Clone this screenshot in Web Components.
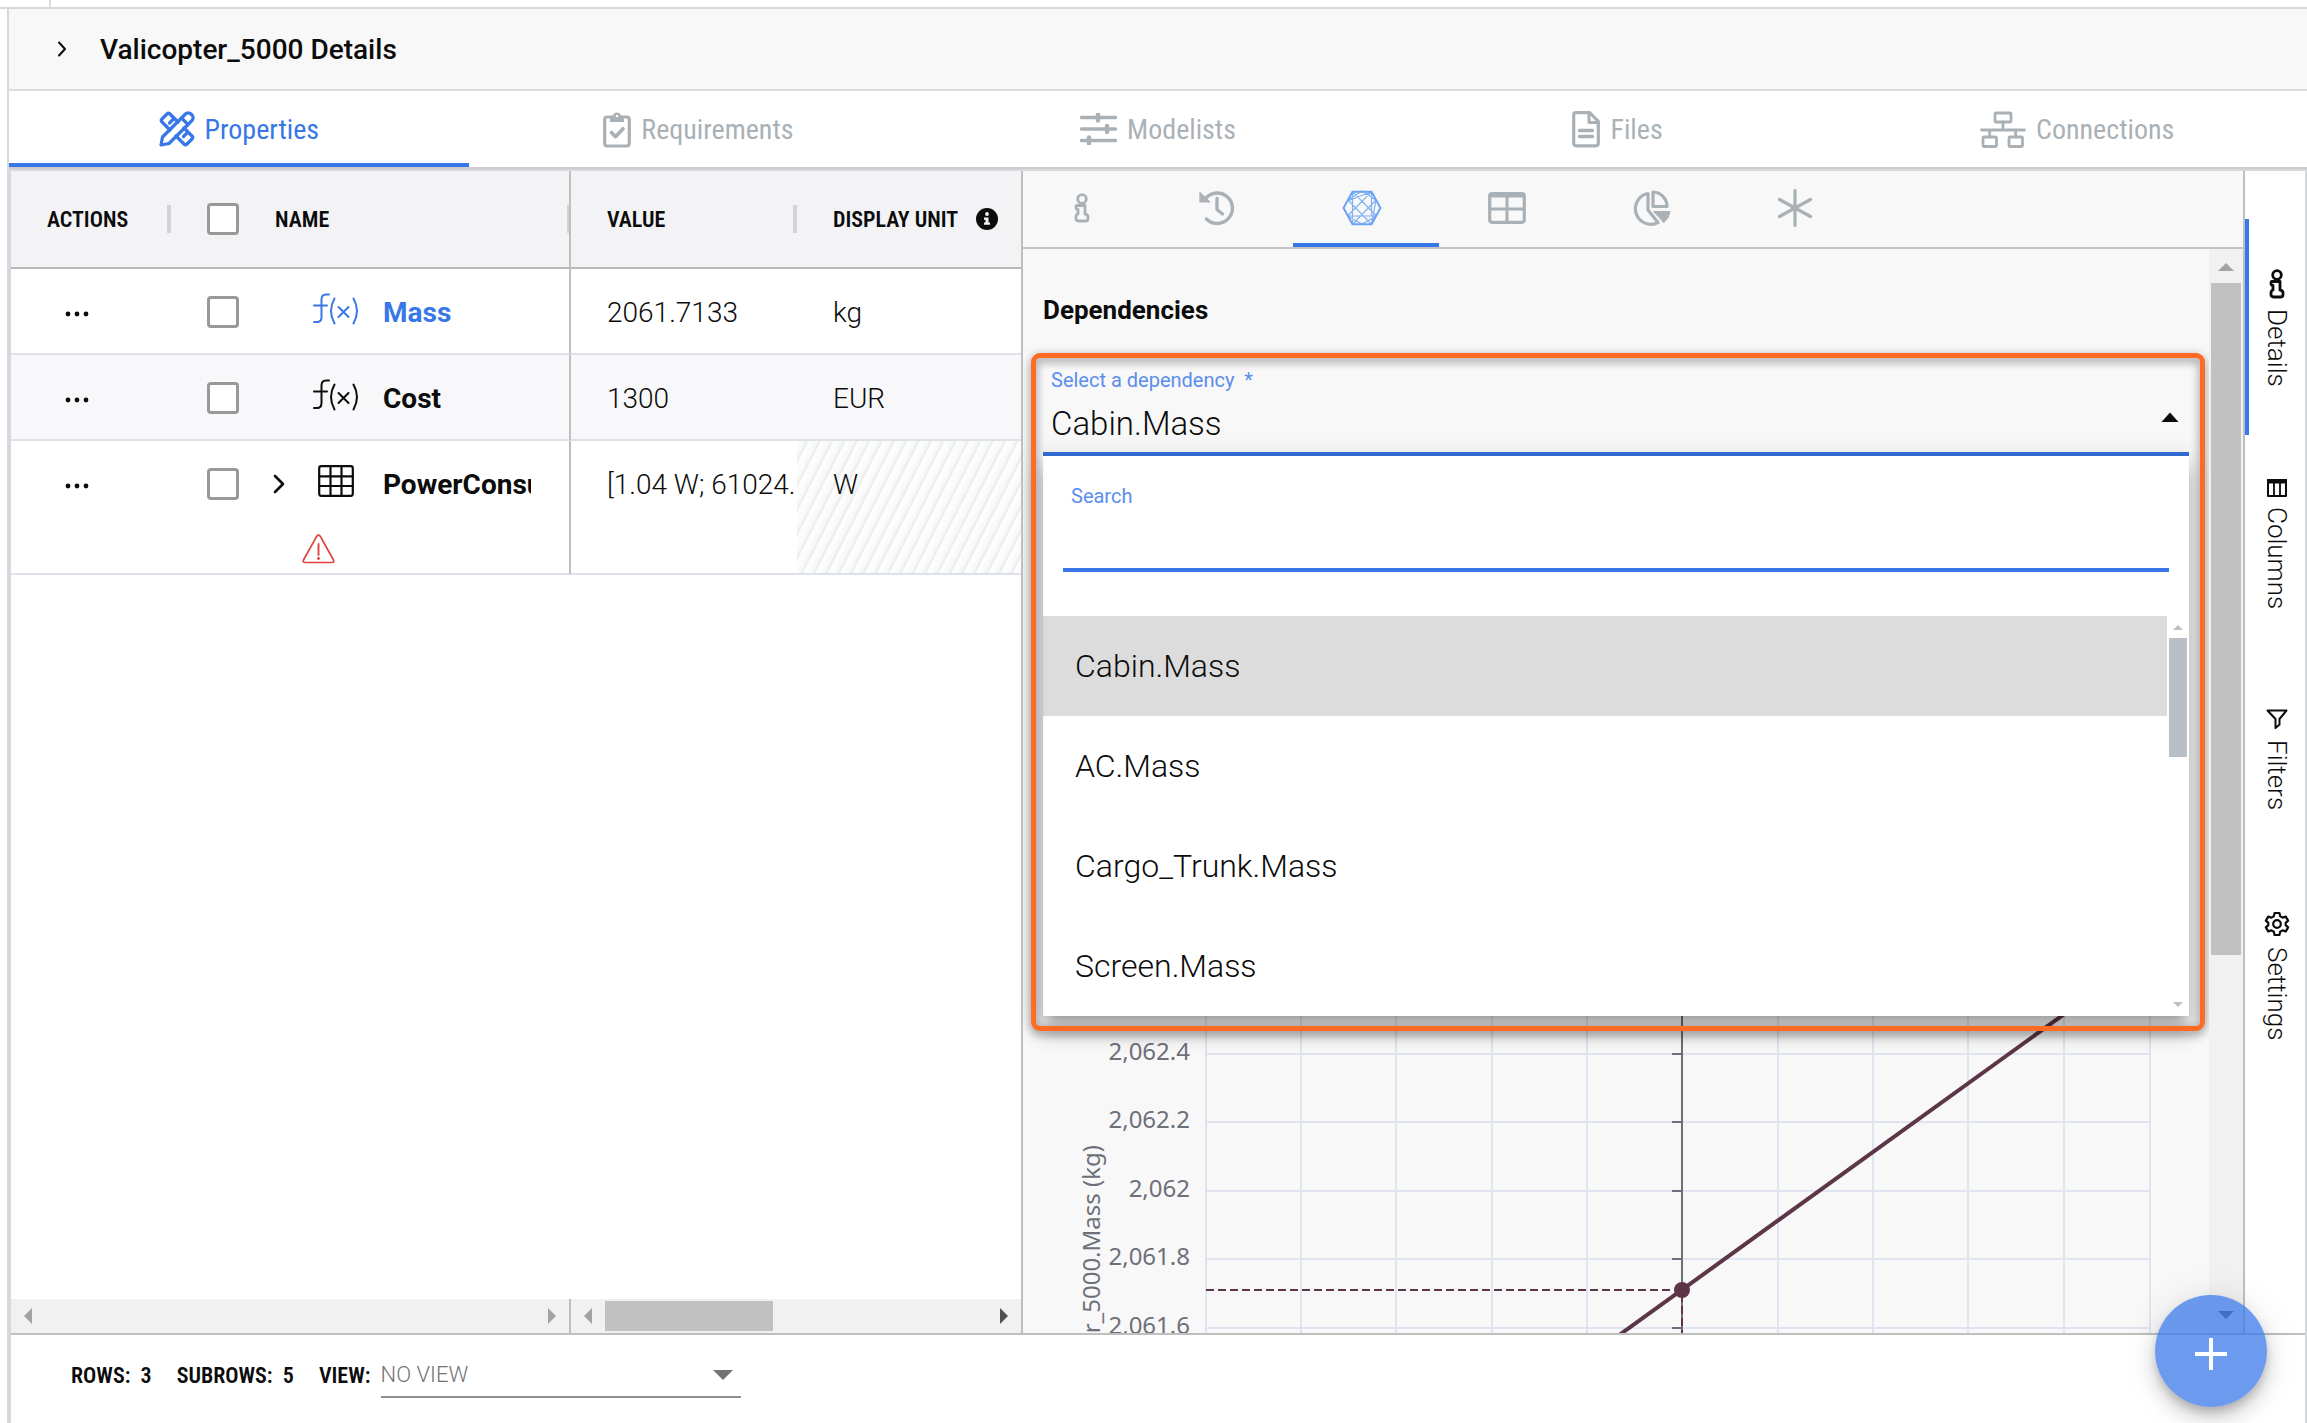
<!DOCTYPE html>
<html lang="en">
<head>
<meta charset="utf-8">
<title>Valicopter_5000 Details</title>
<style>
  html, body { margin: 0; height: 100%; }
  body {
    font-family: Roboto, "Liberation Sans", sans-serif;
    color: #0c0c0c; background: #fff; overflow: hidden;
    --blue: #3877e8; --muted: #a9b1b7; --frame: #d5d9dd; --line: #bfbfbf;
    --narrow: "Roboto Condensed", Roboto, sans-serif;
  }
</style>
</head>
<body>
<app-shell>
  <details-header slot="header">Valicopter_5000 Details</details-header>
  <nav-tabs slot="tabs">
    <nav-tab icon="tools" active>Properties</nav-tab>
    <nav-tab icon="clipboard">Requirements</nav-tab>
    <nav-tab icon="sliders">Modelists</nav-tab>
    <nav-tab icon="file">Files</nav-tab>
    <nav-tab icon="sitemap">Connections</nav-tab>
  </nav-tabs>
  <property-grid slot="grid"></property-grid>
  <details-panel slot="panel">
    <dependency-select></dependency-select>
    <dependency-chart></dependency-chart>
  </details-panel>
  <side-rail slot="rail">
    <side-tab icon="info" active>Details</side-tab>
    <side-tab icon="columns">Columns</side-tab>
    <side-tab icon="filter">Filters</side-tab>
    <side-tab icon="gear">Settings</side-tab>
  </side-rail>
  <grid-footer slot="footer"></grid-footer>
  <add-button slot="fab"></add-button>
</app-shell>

<script>
const ICONS = {
  chevron: [10, 16, '<path d="M2 1.500l6 6.500-6 6.500" stroke-width="2"/>'],
  chevronBold: [13, 20, '<path d="M2 2l8 8-8 8" stroke-width="2.600"/>'],
  tools: [36, 36, '<g stroke-width="3.200"><path d="M2 34l1.500-8L26.500 3a4 4 0 0 1 5.500 0l1 1a4 4 0 0 1 0 5.500L10 32.500z"/><path d="M22.500 7l6.500 6.500"/><path d="M11 19L3 11Q1.500 9.500 3 8l5-5q1.500-1.500 3 0l8 8"/><path d="M25 17l8 8q1.500 1.500 0 3l-5 5q-1.500 1.500-3 0l-8-8"/><path d="M14 8.500l-3.500 3.500M28 22l-3.500 3.500"/></g>'],
  clipboard: [28, 37, '<rect x="1.700" y="6" width="24.600" height="29" rx="2.500" stroke-width="3.200"/><path d="M7 11V6.500q0-2 2-2h1a4.200 4.200 0 0 1 8 0h1q2 0 2 2V11z" fill="currentColor" stroke="none"/><circle cx="14" cy="5" r="1.300" fill="#fff" stroke="none"/><path d="M8.500 21.500l4 4.200 7.500-8" stroke-width="3.600"/>'],
  sliders: [37, 32, '<path d="M1.500 4.500h34M1.500 16h34M1.500 27.500h34" stroke-width="3.400"/><path d="M18 1.500v6M27 13v6M9 24.500v6" stroke-width="4.400"/>'],
  file: [28, 37, '<path d="M1.700 4.200q0-2.500 2.500-2.500h13.500l8.600 8.600v22q0 2.500-2.500 2.500H4.200q-2.500 0-2.500-2.500z" stroke-width="3.200"/><path d="M17 2v9.500h9" stroke-width="3"/><path d="M7.500 19.500h13M7.500 25.500h13" stroke-width="3.400"/>'],
  sitemap: [46, 37, '<g stroke-width="2.800"><rect x="15" y="2" width="16" height="9" rx="1"/><rect x="3" y="26" width="13.500" height="9.500" rx="1"/><rect x="29" y="26" width="13.500" height="9.500" rx="1"/><path d="M23 11v8M1.500 19h43M9.700 19v7M35.700 19v7"/></g>'],
  info: [16, 30, '<circle cx="8" cy="6" r="4.300" stroke-width="2.800"/><path d="M3 12.500h8v8.500q3 .5 3 3v1.500q0 2.500-2.500 2.500H4.500Q2 28 2 25.500V24q0-2.500 2-3v-4.500q-2 0-2-2t1-2z" stroke-width="2.800"/>'],
  history: [36, 36, '<path d="M5.500 10A15.200 15.200 0 1 1 7.500 29" stroke-width="3.400"/><path d="M1.200 2.500l9.800 9.500H1.200z" fill="currentColor" stroke-width="1"/><path d="M18 8.500V19.500l5.500 4.500" stroke-width="3.400"/>'],
  poly: [40, 36, '<path d="M1.500 18L10.500 1.700h19L38.500 18l-9 16.300h-19z" stroke-width="2"/><g stroke-width="1.200" opacity=".85"><path d="M10.500 1.700v32.600M29.500 1.700v24M5.500 11L29.500 1.700M6 10L20 1M10.500 1.700L34.500 26M29.500 1.700L5.500 26M6 10l23.500 24.300M34 10L10.500 34.300M5.500 26h29M34 10l-4.500 24.300M20 34L5.500 26M20 34l14.500-8M20 1l14 9"/></g>'],
  table: [38, 32, '<rect x="1.700" y="1.700" width="34.600" height="28.600" rx="2.500" stroke-width="3.200"/><path d="M2 4h34M19 3v27M2 17h34" stroke-width="3"/>'],
  pie: [40, 37, '<path d="M17 3.500A15.500 15.500 0 1 0 27 32.500L17 20z" stroke-width="3.200"/><path d="M22 2v14.500h14A14.500 14.500 0 0 0 22 2z" stroke-width="3.200"/><path d="M23 21.500h16q-.5 6-6 11z" fill="currentColor" stroke-width="1"/>'],
  asterisk: [34, 38, '<path d="M17 1.500v35M1.500 10.500l31 17M32.500 10.500l-31 17" stroke-width="3.200"/>'],
  columns: [20, 18, '<path d="M1 1h18v16H1z" stroke-width="2"/><path d="M0 0h20v4.500H0z" fill="currentColor" stroke="none"/><path d="M7 3v14M13 3v14" stroke-width="1.800"/>'],
  filter: [22, 21, '<path d="M1.500 1.500h19l-7 8.500v5.500L9.500 19V10z" stroke-width="2"/>'],
  gear: [26, 26, '<path d="M10.600 2h4.800l.8 3.300 2.300 1.300 3.300-1 2.300 4-2.400 2.300v2.200l2.400 2.300-2.300 4-3.300-1-2.300 1.300-.8 3.300h-4.800l-.8-3.300-2.300-1.300-3.300 1-2.300-4 2.400-2.300v-2.200L1.900 9.600l2.300-4 3.300 1 2.300-1.300z" stroke-width="2.200"/><circle cx="13" cy="13" r="3.800" stroke-width="2.200"/>'],
  dots: [24, 6, '<g fill="currentColor" stroke="none"><circle cx="3" cy="3" r="2.400"/><circle cx="12" cy="3" r="2.400"/><circle cx="21" cy="3" r="2.400"/></g>'],
  fx: [46, 32, '<g stroke-width="2"><path d="M16 1.500h-3q-4.500 0-4.500 5V24q0 5-4.500 5H1M1 12.500h13"/><path d="M21.500 5.500q-7 12.500 0 25M40.500 5.500q7 12.500 0 25"/><path d="M25.500 14l10 10M35.500 14l-10 10"/></g>'],
  grid: [36, 32, '<rect x="1.200" y="1.200" width="33.600" height="29.600" rx="2" stroke-width="2.200"/><path d="M12.500 1v30M23.500 1v30M1 11.300h34M1 21h34" stroke-width="2.200"/>'],
  warning: [33, 30, '<path d="M14.800 2.200q1.700-2.200 3.400 0L31.500 26q1 2.500-1.500 2.500H3Q.5 28.500 1.500 26z" stroke-width="1.700"/><path d="M16.500 10v11" stroke-width="1.900"/><circle cx="16.500" cy="24.500" r="1.400" fill="currentColor" stroke="none"/>'],
  infoDot: [22, 22, '<circle cx="11" cy="11" r="11" fill="currentColor" stroke="none"/><g fill="#f3f3f6" stroke="none"><circle cx="11" cy="6" r="1.900"/><path d="M8 9.500h4.500v5H14v2.200H8v-2.200h1.500v-2.800H8z"/></g>'],
  plus: [32, 32, '<path d="M16 0v32M0 16h32" stroke-width="4" stroke-linecap="butt"/>'],
  up: [16, 8, '<path d="M0 8L8 0l8 8z" fill="currentColor" stroke="none"/>'],
  down: [16, 8, '<path d="M0 0h16L8 8z" fill="currentColor" stroke="none"/>'],
  left: [8, 16, '<path d="M8 0v16L0 8z" fill="currentColor" stroke="none"/>'],
  right: [8, 16, '<path d="M0 0v16l8-8z" fill="currentColor" stroke="none"/>'],
  smallUp: [10, 5, '<path d="M0 5l5-5 5 5z" fill="currentColor" stroke="none"/>'],
  smallDown: [10, 5, '<path d="M0 0h10L5 5z" fill="currentColor" stroke="none"/>'],
  caretUp: [18, 10, '<path d="M.5 10L9 .5 17.500 10z" fill="currentColor" stroke="none"/>'],
  caretDown: [20, 10, '<path d="M0 0h20L10 10z" fill="currentColor" stroke="none"/>']
};

function define(name, html, setup) {
  const template = document.createElement('template');
  template.innerHTML = '<style>*{box-sizing:border-box}:host{display:block;box-sizing:border-box}button,select,input{font:inherit;color:inherit;background:none;border:0;padding:0;margin:0;border-radius:0}</style>' + html;
  customElements.define(name, class extends HTMLElement {
    connectedCallback() {
      if (this.shadowRoot) return;
      this.attachShadow({ mode: 'open' }).append(template.content.cloneNode(true));
      if (setup) setup(this, this.shadowRoot);
    }
  });
}

define('ui-icon', `<style>:host{display:block;flex:none}svg{display:block;fill:none;stroke:currentColor;stroke-linejoin:round;stroke-linecap:round}</style>`, (el, root) => {
  const [w, h, body] = ICONS[el.getAttribute('name')];
  const box = document.createElement('div');
  box.innerHTML = `<svg width="${w}" height="${h}" viewBox="0 0 ${w} ${h}" aria-hidden="true">${body}</svg>`;
  root.append(box.firstChild);
});

define('app-shell', `<style>
  :host{display:flex;flex-direction:column;height:100vh;position:relative}
  .strip{flex:none;height:9px;padding-left:49px;border-bottom:2px solid var(--frame)}
  .strip i{display:block;width:2px;height:7px;background:#ddd}
  .page{flex:1;min-height:0;display:flex;flex-direction:column;margin-left:7px;border-left:2px solid var(--frame)}
  .body{flex:1;min-height:0;display:flex;flex-direction:column;border:2px solid var(--frame);border-bottom:0}
  .row{flex:1;min-height:0;display:flex}
  </style>
  <div class="strip"><i></i></div>
  <div class="page">
    <slot name="header"></slot><slot name="tabs"></slot>
    <div class="body">
      <div class="row"><slot name="grid"></slot><slot name="panel"></slot><slot name="rail"></slot></div>
      <slot name="footer"></slot>
    </div>
  </div>
  <slot name="fab"></slot>`);

define('details-header', `<style>
  :host{flex:none;display:flex;align-items:center;gap:33px;height:82px;padding-left:48px;background:#f8f8f8;border-bottom:2px solid #dcdcdc}
  h1{margin:0;padding-top:2px;font-size:28px;line-height:32px;font-weight:500}
  button{display:block}
  </style><button aria-label="Expand"><ui-icon name="chevron"></ui-icon></button><h1><slot></slot></h1>`);

define('nav-tabs', `<style>:host{flex:none;display:flex;height:78px;border-bottom:2px solid #ccc}</style><slot></slot>`);

define('nav-tab', `<style>
  :host{flex:1 1 0;color:var(--muted)}
  :host([active]){color:var(--blue)}
  button{width:100%;height:76px;padding-top:4px;border-bottom:4px solid transparent;display:flex;align-items:center;justify-content:center;gap:10px;font:400 28px/32px var(--narrow)}
  span{padding-top:2px}
  :host([active]) button{border-color:var(--blue)}
  </style><button role="tab"><span><slot></slot></span></button>`, (el, root) => {
  const icon = document.createElement('ui-icon');
  icon.setAttribute('name', el.getAttribute('icon'));
  root.querySelector('button').prepend(icon);
});

define('scroll-bar', `<style>
  :host{display:flex;align-items:center;justify-content:space-between;height:34px;padding:0 13px;background:#f1f1f1;color:#a3a3a3}
  .thumb{flex:none;width:168px;height:30px;background:#c1c1c1;margin-left:13px;margin-right:auto}
  :host(:not([thumb])) .thumb{display:none}
  :host([thumb]) .end{color:#505050}
  </style><ui-icon name="left"></ui-icon><div class="thumb"></div><ui-icon class="end" name="right"></ui-icon>`);

define('property-grid', `<style>
  :host{flex:none;display:flex;flex-direction:column;width:1012px;border-right:2px solid var(--line);background:#fff}
  table{width:1010px;table-layout:fixed;border-collapse:separate;border-spacing:0;font-size:28px;line-height:32px;font-weight:300}
  th,td{padding:0;text-align:left;vertical-align:top;overflow:hidden}
  th{height:98px;background:#f3f3f6;border-bottom:2px solid #b9b9b9;font:600 22px/26px var(--narrow)}
  .head{height:96px;display:flex;align-items:center}
  .head::after{content:"";width:4px;height:28px;background:#d3d3d6;margin-left:auto}
  .head.pick::after{width:2px}
  .head span,.cell span.t{padding-top:2px}
  th:last-child .head::after{display:none}
  td{border-bottom:2px solid #dde1ea}
  td:nth-child(2),th:nth-child(2){border-right:2px solid var(--line)}
  tr:nth-child(2) td{background:#f8f8fb}
  .cell{height:84px;padding-top:2px;display:flex;align-items:center;white-space:nowrap}
  .cell.act{padding:6px 0 0 54px}
  .head.act0{padding-left:36px}
  .pick{padding-left:36px}
  .v{padding-left:36px}
  input{appearance:none;flex:none;width:32px;height:32px;border:3px solid #999;border-radius:4px;background:#fff}
  .exp{width:12px;margin-left:34px;flex:none}
  .ico{width:46px;margin-left:28px;display:flex;justify-content:center;flex:none;padding-bottom:6px}
  .name{margin-left:24px;width:148px;overflow:hidden;font-weight:700}
  .mass{color:var(--blue)}
  .title{margin-left:36px}
  .warn{height:48px;padding:9px 0 0 131px;color:#e0413c}
  .hatch{background:repeating-linear-gradient(117deg,#fff 0,#f7f8f8 7px,#edefef 9px,#edefef 10px,#fff 11px)}
  .unit{gap:18px}
  .fill{flex:1}
  .bars{flex:none;display:flex}
  .bars scroll-bar:first-child{width:560px;border-right:2px solid var(--line)}
  .bars scroll-bar:last-child{flex:1}
  </style>
  <table>
    <colgroup><col style="width:160px"><col style="width:400px"><col style="width:226px"><col style="width:224px"></colgroup>
    <thead><tr>
      <th><div class="head act0"><span>ACTIONS</span></div></th>
      <th><div class="head pick"><input type="checkbox" aria-label="Select all rows"><span class="title">NAME</span></div></th>
      <th><div class="head v"><span>VALUE</span></div></th>
      <th><div class="head v unit"><span>DISPLAY UNIT</span><ui-icon name="infoDot"></ui-icon></div></th>
    </tr></thead>
    <tbody>
      <tr><td><div class="cell act"><button aria-label="Mass actions"><ui-icon name="dots"></ui-icon></button></div></td>
        <td><div class="cell pick mass"><input type="checkbox" aria-label="Select Mass"><span class="exp"></span><span class="ico"><ui-icon name="fx"></ui-icon></span><span class="name t">Mass</span></div></td>
        <td><div class="cell v"><span class="t">2061.7133</span></div></td><td><div class="cell v"><span class="t">kg</span></div></td></tr>
      <tr><td><div class="cell act"><button aria-label="Cost actions"><ui-icon name="dots"></ui-icon></button></div></td>
        <td><div class="cell pick"><input type="checkbox" aria-label="Select Cost"><span class="exp"></span><span class="ico"><ui-icon name="fx"></ui-icon></span><span class="name t">Cost</span></div></td>
        <td><div class="cell v"><span class="t">1300</span></div></td><td><div class="cell v"><span class="t">EUR</span></div></td></tr>
      <tr><td><div class="cell act"><button aria-label="Row actions"><ui-icon name="dots"></ui-icon></button></div></td>
        <td><div class="cell pick"><input type="checkbox" aria-label="Select row"><span class="exp"><ui-icon name="chevronBold"></ui-icon></span><span class="ico"><ui-icon name="grid"></ui-icon></span><span class="name t">PowerConsu</span></div>
          <div class="warn"><ui-icon name="warning"></ui-icon></div></td>
        <td><div class="cell v"><span class="t">[1.04 W; 61024.</span></div></td><td class="hatch"><div class="cell v"><span class="t">W</span></div></td></tr>
    </tbody>
  </table>
  <div class="fill"></div>
  <div class="bars"><scroll-bar></scroll-bar><scroll-bar thumb></scroll-bar></div>`);

define('details-panel', `<style>
  :host{flex:1;min-width:0;display:flex;flex-direction:column;background:#f8f8f8;border-right:2px solid var(--line)}
  .tools{flex:none;height:78px;display:flex;border-bottom:2px solid #c4c4c4;color:var(--muted)}
  .tools button{width:144px;height:76px;padding:2px 8px 0 0;border-bottom:4px solid transparent;display:flex;align-items:center;justify-content:center}
  .tools button:first-child{width:126px}
  .tools .on{width:146px;color:#6ba4f2;border-color:var(--blue)}
  .area{flex:1;min-height:0;display:flex}
  .content{flex:1;min-width:0;overflow:hidden;padding:45px 20px 0;display:flex;flex-direction:column}
  h2{margin:0;font-size:26px;line-height:32px;font-weight:700}
  .bar{flex:none;width:34px;background:#f1f1f1;display:flex;flex-direction:column;align-items:center;padding:14px 0;color:#a3a3a3}
  .bar i{width:30px;height:672px;margin-top:12px;background:#c1c1c1}
  .bar .end{margin-top:auto;color:#505050}
  </style>
  <div class="tools" role="tablist">
    <button aria-label="Info"><ui-icon name="info"></ui-icon></button>
    <button aria-label="History"><ui-icon name="history"></ui-icon></button>
    <button class="on" aria-label="Dependencies"><ui-icon name="poly"></ui-icon></button>
    <button aria-label="Table"><ui-icon name="table"></ui-icon></button>
    <button aria-label="Chart"><ui-icon name="pie"></ui-icon></button>
    <button aria-label="All"><ui-icon name="asterisk"></ui-icon></button>
  </div>
  <div class="area">
    <div class="content"><h2>Dependencies</h2><slot></slot></div>
    <div class="bar"><ui-icon name="up"></ui-icon><i></i><ui-icon class="end" name="down"></ui-icon></div>
  </div>`);

define('dependency-select', `<style>
  :host{position:relative;z-index:2;flex:none;height:130px;padding-top:42px}
  label{display:block;font-size:20px;line-height:24px;color:#5b8eec}
  .field label{padding-left:8px}
  .field{display:flex;flex-direction:column;height:88px;border-bottom:4px solid #3370dd}
  .box{display:flex;align-items:center;padding:0 10px 0 8px;height:40px;margin-top:12px}
  select{appearance:none;flex:1;font-size:33px;line-height:40px;font-weight:300;height:40px}
  .box ui-icon{margin-bottom:14px}
  .menu{position:absolute;top:100%;left:0;right:0;background:#fff;box-shadow:0 10px 10px -6px rgba(0,0,0,.2),0 16px 20px 2px rgba(0,0,0,.14),0 6px 28px 4px rgba(0,0,0,.12)}
  .search{padding:28px 20px 44px}
  .search label{padding-left:8px}
  .search input{display:block;width:100%;height:64px;padding:8px;font-size:28px;border-bottom:4px solid var(--blue);outline:0}
  .list{display:flex;height:400px}
  ul{flex:1;margin:0;padding:0;list-style:none}
  li{height:100px;line-height:100px;padding-left:32px;font-size:32px;font-weight:300}
  li[aria-selected]{background:#dcdcdc}
  .bar{width:22px;padding:9px 0;display:flex;flex-direction:column;align-items:center;color:#b8bfc6}
  .bar i{width:18px;height:119px;margin-top:8px;background:#b8bfc6}
  .bar .end{margin-top:auto}
  .ring{position:absolute;left:-12px;right:-16px;top:27px;height:678px;border:5px solid #ff6b24;border-radius:9px;filter:drop-shadow(0 3px 5px rgba(0,0,0,.5));pointer-events:none}
  </style>
  <div class="menu">
    <div class="search"><label for="q">Search</label><input id="q" type="text"></div>
    <div class="list">
      <ul role="listbox" aria-label="Dependencies"><li role="option" aria-selected="true">Cabin.Mass</li><li role="option">AC.Mass</li><li role="option">Cargo_Trunk.Mass</li><li role="option">Screen.Mass</li></ul>
      <div class="bar"><ui-icon name="smallUp"></ui-icon><i></i><ui-icon class="end" name="smallDown"></ui-icon></div>
    </div>
  </div>
  <div class="field">
    <label for="dep">Select a dependency &nbsp;*</label>
    <div class="box"><select id="dep"><option>Cabin.Mass</option></select><ui-icon name="caretUp"></ui-icon></div>
  </div>
  <div class="ring"></div>`);

define('dependency-chart', `<style>
  :host{flex:1;min-height:0;overflow:hidden}
  svg{display:block}
  text{font:400 24px "Noto Sans","Open Sans",sans-serif;fill:#6e7079}
  </style>`, (el, root) => {
  const svg = document.createElementNS('http://www.w3.org/2000/svg', 'svg');
  root.append(svg);
  const labels = ['2,062.6', '2,062.4', '2,062.2', '2,062', '2,061.8', '2,061.6'];
  const draw = () => {
    const width = el.clientWidth, height = 900, left = 163, right = width - 39;
    const step = (right - left) / 9.9, axis = Math.floor(left + step * 5);
    // The first labelled gridline sits under the open menu.
    const y0 = 529, pitch = 68.5, py = 834;
    let s = '';
    for (let i = 0; i < 10; i++) if (i !== 5) { const x = Math.floor(left + step * i); s += `<path d="M${x} 0V${height}"/>`; }
    s += `<path d="M${right} 0V${height}"/>`;
    labels.forEach((t, i) => { const y = Math.round(y0 + pitch * i); s += `<path d="M${left} ${y}H${right}"/>`; });
    s = `<g stroke="#e0e4f0" stroke-width="2">${s}</g><path d="M${axis} 0V${height}" stroke="#6e7079" stroke-width="2"/>`;
    labels.forEach((t, i) => {
      const y = Math.round(y0 + pitch * i);
      s += `<path d="M${axis - 10} ${y}h10" stroke="#6e7079" stroke-width="2"/>`;
      if (i) s += `<text x="${left - 16}" y="${y + 6}" text-anchor="end">${t}</text>`;
    });
    s += `<path d="M${left} ${py}H${axis}V${height}" fill="none" stroke="#5c3546" stroke-width="2" stroke-dasharray="8 4"/>`;
    s += `<path d="M${axis - 139} ${py + 100}L${axis + 417} ${py - 301}" stroke="#5c3546" stroke-width="4"/>`;
    s += `<circle cx="${axis}" cy="${py}" r="8" fill="#5c3546"/>`;
    s += `<text transform="translate(57 689) rotate(-90)" text-anchor="end">Valicopter_5000.Mass (kg)</text>`;
    svg.setAttribute('width', width); svg.setAttribute('height', height);
    svg.innerHTML = s;
  };
  draw();
  new ResizeObserver(draw).observe(el);
});

define('side-rail', `<style>:host{flex:none;width:60px;padding-top:48px;background:#fff}</style><slot></slot>`);

define('side-tab', `<style>
  button{width:60px;height:216px;border-left:4px solid transparent;display:flex;flex-direction:column;align-items:center;justify-content:center;gap:10px;padding-top:2px;font:300 26px/32px Roboto,sans-serif}
  :host([active]) button{border-color:var(--blue)}
  span{writing-mode:vertical-rl}
  </style><button><span><slot></slot></span></button>`, (el, root) => {
  const icon = document.createElement('ui-icon');
  icon.setAttribute('name', el.getAttribute('icon'));
  root.querySelector('button').prepend(icon);
});

define('grid-footer', `<style>
  :host{flex:none;display:flex;align-items:center;height:90px;padding:0 0 6px 60px;border-top:2px solid var(--line);font:600 22px/26px var(--narrow)}
  span{margin-right:25px;white-space:pre}
  .pick{display:flex;align-items:center;width:360px;height:40px;margin:3px 0 0 10px;border-bottom:2px solid #8f8f8f;padding:0 8px 3px 0;color:#737373}
  select{appearance:none;flex:1;font:300 22px/26px Roboto,sans-serif}
  </style>
  <span>ROWS:  3</span><span>SUBROWS:  5</span><label for="view">VIEW:</label>
  <div class="pick"><select id="view"><option>NO VIEW</option></select><ui-icon name="caretDown"></ui-icon></div>`);

define('add-button', `<style>
  :host{position:absolute;right:40px;bottom:16px;z-index:5}
  button{width:112px;height:112px;padding-top:6px;border-radius:50%;display:flex;align-items:center;justify-content:center;color:#fff;background:rgba(58,120,234,.75);box-shadow:0 6px 10px -2px rgba(0,0,0,.2),0 12px 20px rgba(0,0,0,.14),0 2px 36px rgba(0,0,0,.1)}
  </style><button aria-label="Add"><ui-icon name="plus"></ui-icon></button>`);
</script>
</body>
</html>
